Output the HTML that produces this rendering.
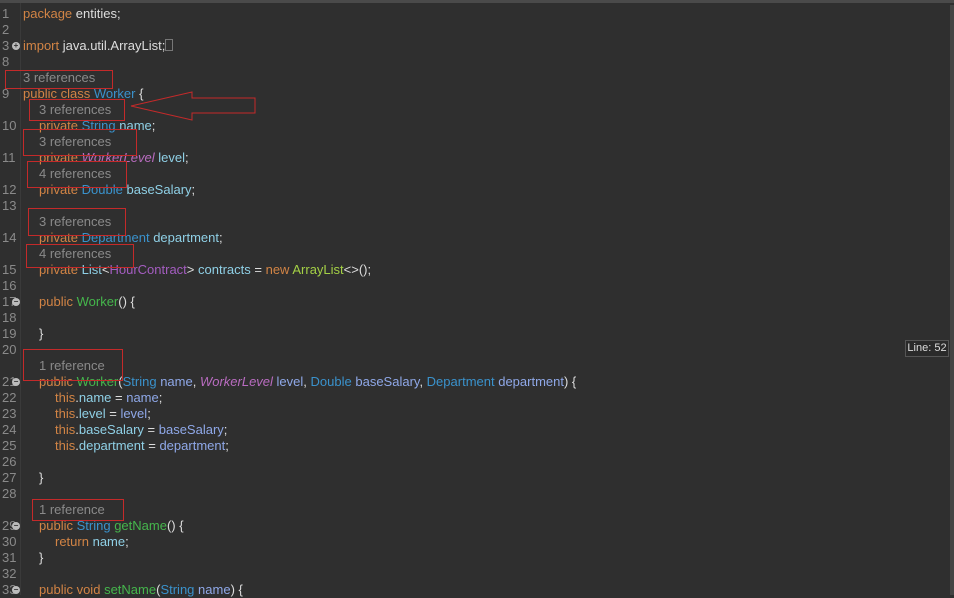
<!DOCTYPE html>
<html><head><meta charset="utf-8"><style>
body{margin:0;width:954px;height:595px;background:#2f2f2f;overflow:hidden;position:relative;font-family:"Liberation Sans",sans-serif;font-size:13px;}
.top{position:absolute;left:0;top:0;width:954px;height:3px;background:#4a4a4a}
.sb{position:absolute;left:950px;top:5px;width:4px;height:590px;background:#444}
.gut{position:absolute;left:20px;top:3px;width:1px;height:592px;background:#3a3a3a}
.r{position:absolute;left:0;height:16px;line-height:16px;white-space:pre;color:#ddd;margin-top:1px}
.n{position:absolute;left:2px;color:#8a8a8a}
.c{position:absolute;left:23px}
.k{color:#d28445}.b{color:#3a92cc}.f{color:#8fd0e6}.p{color:#8fa8e8}.pu{color:#b96cc0;font-style:italic}.pp{color:#a45dc0}.g{color:#45b64c}.y{color:#a4d046}.ref{color:#8a8a8a}
.fold{position:absolute;left:12px;width:8px;height:8px;border-radius:50%;background:#bbb;color:#333;font-size:8px;line-height:8px;text-align:center;font-weight:bold;margin-top:1px}
.ln{position:absolute;left:905px;top:340px;width:42px;height:15px;border:1px solid #555;color:#ddd;font-size:11px;line-height:15px;text-align:center;background:#2a2a2a}
</style></head><body>
<div class="top"></div><div class="sb"></div><div class="gut"></div>
<div class="r" style="top:5px"><span class="n">1</span><span class="c"><span class="k">package</span> entities;</span></div>
<div class="r" style="top:21px"><span class="n">2</span></div>
<div class="r" style="top:37px"><span class="n">3</span><span class="c"><span class="k">import</span> java.util.ArrayList;<span style="border:1px solid #777;display:inline-block;width:6px;height:10px;vertical-align:-1px"></span></span></div>
<div class="fold" style="top:41px">+</div>
<div class="r" style="top:53px"><span class="n">8</span></div>
<div class="r" style="top:69px"><span class="c ref">3 references</span></div>
<div class="r" style="top:85px"><span class="n">9</span><span class="c"><span class="k">public class</span> <span class="b">Worker</span> {</span></div>
<div class="r" style="top:101px"><span class="c ref" style="left:39px">3 references</span></div>
<div class="r" style="top:117px"><span class="n">10</span><span class="c" style="left:39px"><span class="k">private</span> <span class="b">String</span> <span class="f">name</span>;</span></div>
<div class="r" style="top:133px"><span class="c ref" style="left:39px">3 references</span></div>
<div class="r" style="top:149px"><span class="n">11</span><span class="c" style="left:39px"><span class="k">private</span> <span class="pu">WorkerLevel</span> <span class="f">level</span>;</span></div>
<div class="r" style="top:165px"><span class="c ref" style="left:39px">4 references</span></div>
<div class="r" style="top:181px"><span class="n">12</span><span class="c" style="left:39px"><span class="k">private</span> <span class="b">Double</span> <span class="f">baseSalary</span>;</span></div>
<div class="r" style="top:197px"><span class="n">13</span></div>
<div class="r" style="top:213px"><span class="c ref" style="left:39px">3 references</span></div>
<div class="r" style="top:229px"><span class="n">14</span><span class="c" style="left:39px"><span class="k">private</span> <span class="b">Department</span> <span class="f">department</span>;</span></div>
<div class="r" style="top:245px"><span class="c ref" style="left:39px">4 references</span></div>
<div class="r" style="top:261px"><span class="n">15</span><span class="c" style="left:39px"><span class="k">private</span> <span class="f">List</span>&lt;<span class="pp">HourContract</span>&gt; <span class="f">contracts</span> = <span class="k">new</span> <span class="y">ArrayList</span>&lt;&gt;();</span></div>
<div class="r" style="top:277px"><span class="n">16</span></div>
<div class="r" style="top:293px"><span class="n">17</span><span class="c" style="left:39px"><span class="k">public</span> <span class="g">Worker</span>() {</span></div>
<div class="fold" style="top:297px">−</div>
<div class="r" style="top:309px"><span class="n">18</span></div>
<div class="r" style="top:325px"><span class="n">19</span><span class="c" style="left:39px">}</span></div>
<div class="r" style="top:341px"><span class="n">20</span></div>
<div class="r" style="top:357px"><span class="c ref" style="left:39px">1 reference</span></div>
<div class="r" style="top:373px"><span class="n">21</span><span class="c" style="left:39px"><span class="k">public</span> <span class="g">Worker</span>(<span class="b">String</span> <span class="p">name</span>, <span class="pu">WorkerLevel</span> <span class="p">level</span>, <span class="b">Double</span> <span class="p">baseSalary</span>, <span class="b">Department</span> <span class="p">department</span>) {</span></div>
<div class="fold" style="top:377px">−</div>
<div class="r" style="top:389px"><span class="n">22</span><span class="c" style="left:55px"><span class="k">this</span>.<span class="f">name</span> = <span class="p">name</span>;</span></div>
<div class="r" style="top:405px"><span class="n">23</span><span class="c" style="left:55px"><span class="k">this</span>.<span class="f">level</span> = <span class="p">level</span>;</span></div>
<div class="r" style="top:421px"><span class="n">24</span><span class="c" style="left:55px"><span class="k">this</span>.<span class="f">baseSalary</span> = <span class="p">baseSalary</span>;</span></div>
<div class="r" style="top:437px"><span class="n">25</span><span class="c" style="left:55px"><span class="k">this</span>.<span class="f">department</span> = <span class="p">department</span>;</span></div>
<div class="r" style="top:453px"><span class="n">26</span></div>
<div class="r" style="top:469px"><span class="n">27</span><span class="c" style="left:39px">}</span></div>
<div class="r" style="top:485px"><span class="n">28</span></div>
<div class="r" style="top:501px"><span class="c ref" style="left:39px">1 reference</span></div>
<div class="r" style="top:517px"><span class="n">29</span><span class="c" style="left:39px"><span class="k">public</span> <span class="b">String</span> <span class="g">getName</span>() {</span></div>
<div class="fold" style="top:521px">−</div>
<div class="r" style="top:533px"><span class="n">30</span><span class="c" style="left:55px"><span class="k">return</span> <span class="f">name</span>;</span></div>
<div class="r" style="top:549px"><span class="n">31</span><span class="c" style="left:39px">}</span></div>
<div class="r" style="top:565px"><span class="n">32</span></div>
<div class="r" style="top:581px"><span class="n">33</span><span class="c" style="left:39px"><span class="k">public void</span> <span class="g">setName</span>(<span class="b">String</span> <span class="p">name</span>) {</span></div>
<div class="fold" style="top:585px">−</div>

<svg style="position:absolute;left:0;top:0" width="954" height="595"><g fill="none" stroke="#c42a2a" stroke-width="1">
<rect x="5.5" y="70.5" width="107" height="18"/>
<rect x="29.5" y="99.5" width="95" height="21"/>
<rect x="23.5" y="129.5" width="113" height="26"/>
<rect x="27.5" y="161.5" width="99" height="26"/>
<rect x="28.5" y="208.5" width="97" height="27"/>
<rect x="26.5" y="244.5" width="107" height="23"/>
<rect x="23.5" y="349.5" width="99" height="31"/>
<rect x="32.5" y="499.5" width="91" height="21"/>
<polygon points="131,106 192,92 192,98 255,98 255,113 192,113 192,120"/></g></svg>
<div class="ln">Line: 52</div>
</body></html>
